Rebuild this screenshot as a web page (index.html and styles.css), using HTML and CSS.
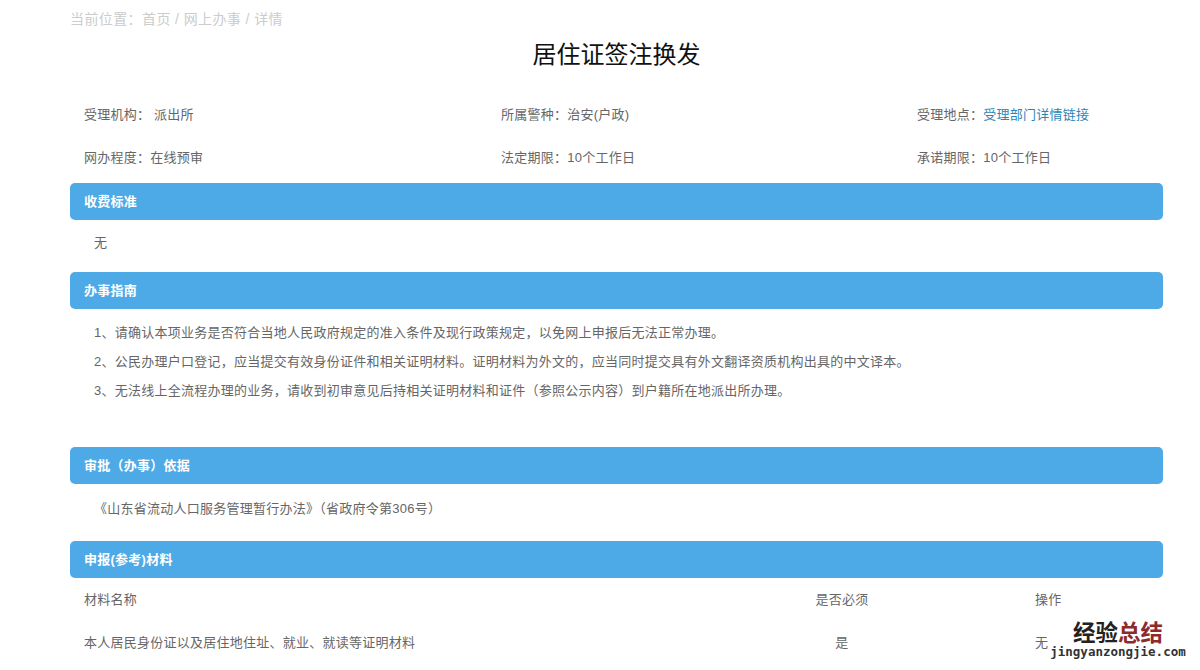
FILE: index.html
```html
<!DOCTYPE html>
<html lang="zh-CN">
<head>
<meta charset="utf-8">
<title>居住证签注换发</title>
<link rel="stylesheet" href="styles.css">
</head>
<body>
<main class="page">
  <div class="crumb">当前位置：首页 / 网上办事 / 详情</div>
  <h1 class="title">居住证签注换发</h1>
  <div class="info">
    <div>受理机构： 派出所</div>
    <div>所属警种：治安(户政)</div>
    <div>受理地点：<a class="link" href="#">受理部门详情链接</a></div>
    <div>网办程度：在线预审</div>
    <div>法定期限：10个工作日</div>
    <div>承诺期限：10个工作日</div>
  </div>
  <h2 class="bar">收费标准</h2>
  <div class="fee">无</div>
  <h2 class="bar">办事指南</h2>
  <div class="guide">
    <p>1、请确认本项业务是否符合当地人民政府规定的准入条件及现行政策规定，以免网上申报后无法正常办理。</p>
    <p>2、公民办理户口登记，应当提交有效身份证件和相关证明材料。证明材料为外文的，应当同时提交具有外文翻译资质机构出具的中文译本。</p>
    <p>3、无法线上全流程办理的业务，请收到初审意见后持相关证明材料和证件（参照公示内容）到户籍所在地派出所办理。</p>
  </div>
  <h2 class="bar">审批（办事）依据</h2>
  <div class="basis">《山东省流动人口服务管理暂行办法》（省政府令第306号）</div>
  <h2 class="bar">申报(参考)材料</h2>
  <div class="table">
    <div class="cell">材料名称</div>
    <div class="cell center">是否必须</div>
    <div class="cell action">操作</div>
    <div class="cell">本人居民身份证以及居住地住址、就业、就读等证明材料</div>
    <div class="cell center">是</div>
    <div class="cell action">无</div>
  </div>
</main>
<div class="mark">
  <div class="mark-cn">经验<span class="mark-red">总结</span></div>
  <div class="mark-en">jingyanzongjie.com</div>
</div>
</body>
</html>
```
FILE: styles.css
```css
html, body {
  margin: 0;
  height: 670px;
  overflow: hidden;
  background: #fff;
}
body {
  position: relative;
  font-family: "Liberation Sans", "Noto Sans CJK SC", sans-serif;
  font-size: 13px;
  letter-spacing: 0.25px;
  color: #666;
}
.page {
  width: 1093px;
  margin-left: 70px;
}
.crumb {
  height: 38px;
  line-height: 38px;
  font-size: 14px;
  letter-spacing: 0.4px;
  color: #ccc;
}
.title {
  margin: 0;
  height: 33px;
  line-height: 33px;
  text-align: center;
  font-size: 24px;
  font-weight: 400;
  letter-spacing: 0;
  color: #111;
}
.info {
  display: grid;
  grid-template-columns: 417px 416px 1fr;
  grid-auto-rows: 43px;
  padding: 22px 0 0 14px;
  height: 90px;
  line-height: 43px;
}
.link { color: #2a86b8; text-decoration: none; }
.bar {
  margin: 0;
  height: 37px;
  line-height: 37px;
  padding-left: 14px;
  border-radius: 5px;
  background: #4daae6;
  color: #fff;
  font-size: 13px;
  font-weight: 700;
}
.fee {
  height: 52px;
  line-height: 46px;
  padding-left: 24px;
}
.guide {
  height: 138px;
  padding: 9px 0 0 24px;
  box-sizing: border-box;
}
.guide p {
  margin: 0;
  line-height: 29px;
}
.basis {
  height: 57px;
  line-height: 49px;
  padding-left: 24px;
}
.table {
  display: grid;
  grid-template-columns: 717px 82px 1fr;
  grid-auto-rows: 43px;
  padding-left: 14px;
  line-height: 43px;
}
.center { text-align: center; }
.action { padding-left: 152px; }
.mark {
  position: absolute;
  right: 14px;
  top: 619px;
  width: 136px;
  text-align: center;
  letter-spacing: 0;
  font-family: "DejaVu Sans Mono", monospace;
}
.mark-cn {
  font-family: "Noto Sans CJK SC", sans-serif;
  font-size: 22.5px;
  font-weight: 700;
  line-height: 25px;
  color: #222;
}
.mark-red { color: #8e2a2a; }
.mark-en {
  font-size: 12.5px;
  font-weight: 700;
  line-height: 15px;
  color: #333;
}
```
